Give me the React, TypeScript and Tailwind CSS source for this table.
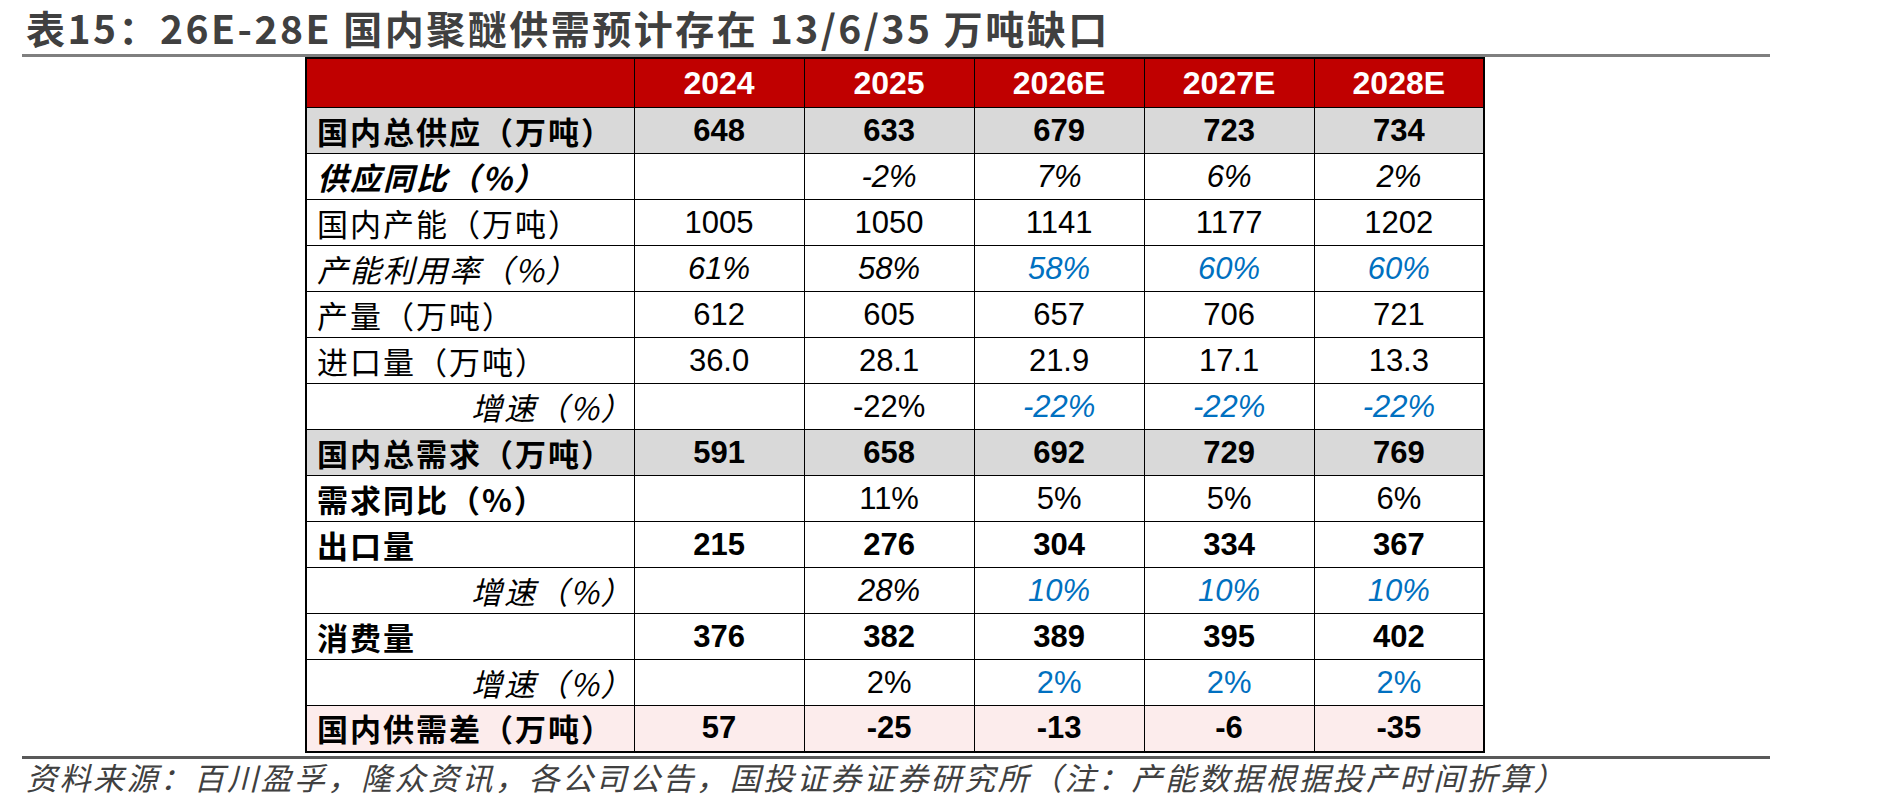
type Cell = {
  v: string;
  blue?: boolean;
  italic?: boolean;
};

type Row = {
  label: string;
  labelBold?: boolean;
  labelItalic?: boolean;
  indent?: boolean;
  bold?: boolean;
  bg?: string;
  cells: Cell[];
};

const years = ['2024', '2025', '2026E', '2027E', '2028E'];

const c = (v: string, opts: Partial<Cell> = {}): Cell => ({ v, ...opts });

const rows: Row[] = [
  {
    label: '国内总供应（万吨）',
    labelBold: true,
    bold: true,
    bg: 'bg-[#d9d9d9]',
    cells: ['648', '633', '679', '723', '734'].map((v) => c(v)),
  },
  {
    label: '供应同比（%）',
    labelBold: true,
    labelItalic: true,
    cells: [c(''), c('-2%', { italic: true }), c('7%', { italic: true }), c('6%', { italic: true }), c('2%', { italic: true })],
  },
  {
    label: '国内产能（万吨）',
    cells: ['1005', '1050', '1141', '1177', '1202'].map((v) => c(v)),
  },
  {
    label: '产能利用率（%）',
    labelItalic: true,
    cells: [
      c('61%', { italic: true }),
      c('58%', { italic: true }),
      c('58%', { italic: true, blue: true }),
      c('60%', { italic: true, blue: true }),
      c('60%', { italic: true, blue: true }),
    ],
  },
  {
    label: '产量（万吨）',
    cells: ['612', '605', '657', '706', '721'].map((v) => c(v)),
  },
  {
    label: '进口量（万吨）',
    cells: ['36.0', '28.1', '21.9', '17.1', '13.3'].map((v) => c(v)),
  },
  {
    label: '增速（%）',
    indent: true,
    labelItalic: true,
    cells: [
      c(''),
      c('-22%'),
      c('-22%', { italic: true, blue: true }),
      c('-22%', { italic: true, blue: true }),
      c('-22%', { italic: true, blue: true }),
    ],
  },
  {
    label: '国内总需求（万吨）',
    labelBold: true,
    bold: true,
    bg: 'bg-[#d9d9d9]',
    cells: ['591', '658', '692', '729', '769'].map((v) => c(v)),
  },
  {
    label: '需求同比（%）',
    labelBold: true,
    cells: [c(''), c('11%'), c('5%'), c('5%'), c('6%')],
  },
  {
    label: '出口量',
    labelBold: true,
    bold: true,
    cells: ['215', '276', '304', '334', '367'].map((v) => c(v)),
  },
  {
    label: '增速（%）',
    indent: true,
    labelItalic: true,
    cells: [
      c(''),
      c('28%', { italic: true }),
      c('10%', { italic: true, blue: true }),
      c('10%', { italic: true, blue: true }),
      c('10%', { italic: true, blue: true }),
    ],
  },
  {
    label: '消费量',
    labelBold: true,
    bold: true,
    cells: ['376', '382', '389', '395', '402'].map((v) => c(v)),
  },
  {
    label: '增速（%）',
    indent: true,
    labelItalic: true,
    cells: [c(''), c('2%'), c('2%', { blue: true }), c('2%', { blue: true }), c('2%', { blue: true })],
  },
  {
    label: '国内供需差（万吨）',
    labelBold: true,
    bold: true,
    bg: 'bg-[#fcecec]',
    cells: ['57', '-25', '-13', '-6', '-35'].map((v) => c(v)),
  },
];

const cjk = "font-['Noto_Sans_CJK_SC',sans-serif]";
const num = "font-['Liberation_Sans',Arial,sans-serif]";

export default function App() {
  return (
    <main className="h-[803px] w-[1889px] overflow-hidden bg-white pl-[22px]">
      <div className="w-[1748px]">
        <h1
          className={`h-[54px] pl-[4px] text-[39px] leading-[54px] font-bold tracking-[2.5px] whitespace-nowrap text-[#404040] ${cjk}`}
        >
          表15：26E-28E 国内聚醚供需预计存在 13/6/35 万吨缺口
        </h1>
        <div className="h-[3px] bg-[#7f7f7f]" />

        <table className="ml-[283px] border-collapse border-2 border-black">
          <colgroup>
            <col className="w-[326px]" />
            {years.map((y) => (
              <col key={y} className="w-[170px]" />
            ))}
          </colgroup>
          <thead>
            <tr className="h-[47px] bg-[#c00000]">
              <th className="border-[1.5px] border-black" />
              {years.map((y) => (
                <th
                  key={y}
                  className={`border-[1.5px] border-black text-center text-[32px] font-bold text-white ${num}`}
                >
                  {y}
                </th>
              ))}
            </tr>
          </thead>
          <tbody>
            {rows.map((row, i) => (
              <tr key={i} className={`h-[46px] ${row.bg ?? 'bg-white'}`}>
                <td
                  className={`border-[1.5px] border-black p-0 text-[31px] leading-[40px] tracking-[2px] whitespace-nowrap text-black ${cjk} ${
                    row.indent ? 'pl-[164px]' : 'pl-[10px]'
                  } ${row.labelBold ? 'font-bold' : 'font-normal'} ${row.labelItalic ? 'italic' : ''}`}
                >
                  {row.label}
                </td>
                {row.cells.map((cell, j) => (
                  <td
                    key={j}
                    className={`border-[1.5px] border-black p-0 text-center text-[31px] leading-[40px] ${num} ${
                      row.bold ? 'font-bold' : 'font-normal'
                    } ${cell.italic ? 'italic' : ''} ${cell.blue ? 'text-[#0070c0]' : 'text-black'}`}
                  >
                    {cell.v}
                  </td>
                ))}
              </tr>
            ))}
          </tbody>
        </table>

        <div className="mt-[3px] h-[3px] bg-[#595959]" />
        <p
          className={`pl-[4px] text-[31px] leading-[36px] tracking-[2.5px] whitespace-nowrap text-[#404040] italic ${cjk}`}
        >
          资料来源：百川盈孚，隆众资讯，各公司公告，国投证券证券研究所（注：产能数据根据投产时间折算）
        </p>
      </div>
    </main>
  );
}
